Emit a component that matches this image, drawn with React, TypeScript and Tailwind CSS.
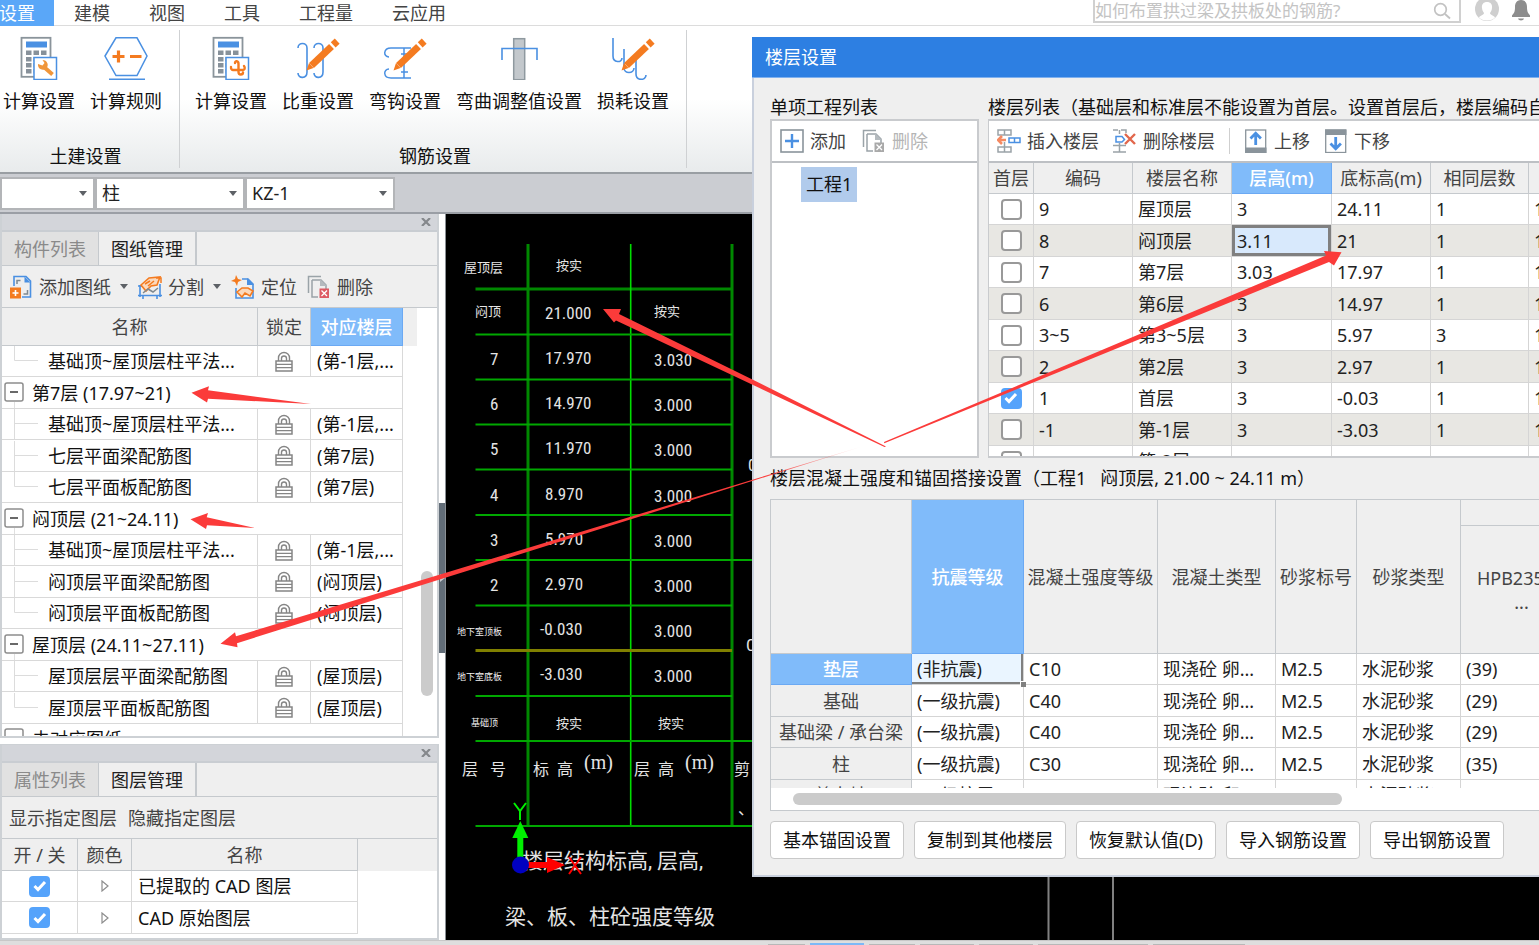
import React from "react";

const BLUE = "#4a90e2";
const ORANGE = "#f47b20";

/* ---------- icons ---------- */

function Svg({ w, h, children }: { w: number; h: number; children: React.ReactNode }) {
  return (
    <svg width={w} height={h} viewBox={`0 0 ${w} ${h}`} fill="none" className="shrink-0" aria-hidden="true">
      {children}
    </svg>
  );
}

function Calculator({ children }: { children: React.ReactNode }) {
  return (
    <Svg w={44} h={44}>
      <rect x="4.5" y="1.8" width="29" height="39" stroke="#8a949b" strokeWidth="1.8" fill="#fff" />
      <rect x="9" y="5.5" width="21" height="6" fill={BLUE} />
      {[14.5, 21, 27, 33].map((y) =>
        [9, 16.5, 24].map((x) => <rect key={`${x}-${y}`} x={x} y={y} width="5.5" height="4.5" fill="#87919a" />)
      )}
      <rect x="17" y="21.5" width="22.5" height="22" fill="#fff" stroke={BLUE} strokeWidth="1.5" />
      {children}
    </Svg>
  );
}

const CalcWrench = () => (
  <Calculator>
    <path d="M27 31l8.500 7.500" stroke="#f0963a" strokeWidth="4" strokeLinecap="butt" />
    <path d="M21 28c-.500 4 3 6.500 6.500 5.500l3-3c1-3-1-6.500-5-6.500l2 3-2 2.500z" fill="#f0963a" />
  </Calculator>
);

const CalcMove = () => (
  <Calculator>
    <path
      d="M26 27c0-2.500 3.500-2.500 3.500 1v8c0 3.500 4.500 3 4.500.500M22 31c-.500 3 1.500 3 4 3h7c3 0 3.500-2 2-4"
      stroke={ORANGE}
      strokeWidth="2.400"
      strokeLinecap="round"
    />
  </Calculator>
);

const Hexagon = () => (
  <Svg w={44} h={44}>
    <path d="M1 20L12 1.800H33L43 20 33 39.500H12z" stroke={BLUE} strokeWidth="1.500" fill="#fff" />
    <path d="M5 43.300H41" stroke={BLUE} strokeWidth="1.500" />
    <path d="M8.500 20.500h12M14.500 14.500v12M26 20.500h11.500" stroke={ORANGE} strokeWidth="3.200" />
  </Svg>
);

const Pencil = () => (
  <g>
    <path d="M10.500 34.500l2.500-7.500 4.500 5z" fill={ORANGE} />
    <path d="M15.500 29.500L35.500 10.500" stroke={ORANGE} strokeWidth="7" />
    <path d="M37.200 8.900l4-3.800" stroke={ORANGE} strokeWidth="7" />
  </g>
);

const HookWeight = () => (
  <Svg w={44} h={44}>
    <path d="M2 12C2 6 11 6 11 12V36C11 43 2 43 2 37M18 12C18 6 27 6 27 12V36C27 43 18 43 18 37" stroke={BLUE} strokeWidth="1.600" />
    <Pencil />
  </Svg>
);

const HookBend = () => (
  <Svg w={44} h={44}>
    <path d="M28 12H8C0 12 0 21 6 21M28 42H8C0 42 0 33 6 33M21 12v30M18 18h7M18 36h7" stroke={BLUE} strokeWidth="1.500" />
    <Pencil />
  </Svg>
);

const BendValue = () => (
  <Svg w={44} h={44}>
    <rect x="16.700" y="2.700" width="11" height="41" fill="#c3c8cc" stroke="#8f999f" strokeWidth="1.500" />
    <path d="M5 24V12.500H40V24" stroke={BLUE} strokeWidth="1.600" />
  </Svg>
);

const Loss = () => (
  <Svg w={44} h={44}>
    <path
      d="M2 2V20C2 27 11 27 11 22M13 13V32C13 38 23 38 23 32M25 24V38C25 45 35 45 35 39"
      stroke={BLUE}
      strokeWidth="1.600"
    />
    <Pencil />
  </Svg>
);

const AddDrawing = () => (
  <Svg w={24} h={24}>
    <path d="M5 11V1.500h12l4.500 4.500v16H13" stroke={BLUE} strokeWidth="1.600" />
    <path d="M15.500 1.500v6h6z" fill={BLUE} />
    <path d="M8 9V5.500h3.500M18.500 15v4h-4" stroke="#7e8991" strokeWidth="1.500" />
    <rect x="1" y="12.500" width="11" height="11" fill={ORANGE} />
    <path d="M6.500 15v6M3.500 18h6" stroke="#fff" strokeWidth="1.600" />
  </Svg>
);

const SplitIcon = () => (
  <Svg w={24} h={24}>
    <path d="M2 10v12M22 9v13M0 11h5M0 20.500h24M5 24v-4M19 24v-4" stroke={BLUE} strokeWidth="1.600" />
    <path d="M3 10l8-7 11-1-3 8-6 1-5 5z" fill="#fbd9bd" stroke={ORANGE} strokeWidth="1.600" />
    <path d="M7 9l5-3M10 11l6-5M18 3h5v5" stroke={ORANGE} strokeWidth="1.500" />
    <path d="M5 18l5-4 5 3 5-4" stroke="#7e8991" strokeWidth="1.500" />
  </Svg>
);

const LocateIcon = () => (
  <Svg w={24} h={24}>
    <path d="M5 0l2 4 4 1-4 2-1 4-2-4-4-1 4-2z" fill={ORANGE} />
    <path d="M11 4h6l5 5v14H5V13" stroke={BLUE} strokeWidth="1.600" />
    <path d="M16 3v7h7z" fill={BLUE} />
    <path d="M6 17l5-4 6 0 5 3-3 5-5-3-3 4z" fill="#fbd9bd" stroke={ORANGE} strokeWidth="1.600" />
  </Svg>
);

function DeleteIcon({ mark }: { mark: string }) {
  return (
    <Svg w={24} h={24}>
      <path d="M1.500 18V1.500H14" stroke="#9aa3a8" strokeWidth="1.500" />
      <path d="M5 5h9l5 5v4M5 5v17h6" stroke="#9aa3a8" strokeWidth="1.500" />
      <path d="M13 4v7h7z" fill="#b4babe" />
      <rect x="12.500" y="13.500" width="9.500" height="9.500" fill={mark} />
      <path d="M14.500 15.500l5.500 5.500M20 15.500l-5.500 5.500" stroke="#fff" strokeWidth="1.300" />
    </Svg>
  );
}

const PlusBox = () => (
  <Svg w={24} h={24}>
    <rect x="1" y="1" width="22" height="22" stroke="#8a949b" strokeWidth="1.600" fill="#fff" />
    <path d="M12 5v14M5 12h14" stroke={BLUE} strokeWidth="2.400" />
  </Svg>
);

const InsertFloor = () => (
  <Svg w={24} h={24}>
    <path d="M1 1h13v5H1zM7.500 1v5M1 18h13v5H1zM7.500 13v10" stroke="#9aa3a8" strokeWidth="1.500" />
    <path d="M9 11H2M5 7l-4 4 4 4" stroke="#f58a62" strokeWidth="2.600" />
    <path d="M12 9h11v4.500H12zM17.500 9v4.500" stroke={BLUE} strokeWidth="1.500" />
  </Svg>
);

const RemoveFloor = () => (
  <Svg w={24} h={24}>
    <path d="M0 1h5M8 1h5v3M6.500 1v4M0 16.500h13M6.500 14v9M0 23h13" stroke="#9aa3a8" strokeWidth="1.500" />
    <path d="M3 7.500h6l2.500 3L9 13H3z" stroke={BLUE} strokeWidth="1.500" />
    <path d="M12 5l10 10M22 5L12 15" stroke="#e2674c" strokeWidth="2.400" />
  </Svg>
);

function MoveIcon({ down }: { down?: boolean }) {
  return (
    <Svg w={24} h={24}>
      <rect x="1.700" y="1" width="20" height="22.500" stroke="#8a949b" strokeWidth="1.300" fill="#fff" />
      <rect x="1" y={down ? 0.5 : 18.5} width="21.500" height="5.500" fill="#8a949b" />
      <path
        d={down ? "M11.700 8v11M6.500 14.500l5.200 5.200 5.200-5.200" : "M11.700 16V5M6.500 9.500l5.200-5.200 5.200 5.200"}
        stroke={BLUE}
        strokeWidth="2.800"
      />
    </Svg>
  );
}

const Lock = () => (
  <Svg w={18} h={21}>
    <path d="M3.500 10V7a5.500 5.500 0 0111 0v3M6.500 10V7.500a2.500 2.500 0 015 0V10" stroke="#858585" strokeWidth="1.400" />
    <rect x="1" y="10" width="16" height="10" stroke="#858585" strokeWidth="1.500" fill="#fff" />
    <path d="M1 13.300h16M1 16.600h16" stroke="#858585" strokeWidth="1.300" />
  </Svg>
);

const Caret = () => (
  <Svg w={8} h={5}>
    <path d="M0 0h8L4 5z" fill="#5d6166" />
  </Svg>
);

/* ---------- shared parts ---------- */

function Check({ label, checked }: { label: string; checked?: boolean }) {
  return (
    <span className="grid place-items-center">
      <input
        type="checkbox"
        aria-label={label}
        defaultChecked={checked}
        className="peer col-start-1 row-start-1 size-[21px] appearance-none rounded-[4px] border-2 border-[#999] bg-white checked:border-[#55a3fb] checked:bg-[#55a3fb]"
      />
      <svg width="14" height="12" viewBox="0 0 14 12" fill="none" className="pointer-events-none invisible col-start-1 row-start-1 peer-checked:visible">
        <path d="M1.500 6l3.500 3.500L12 2" stroke="#fff" strokeWidth="3" />
      </svg>
    </span>
  );
}

function ToolButton({ icon, label, caret, muted }: { icon: React.ReactNode; label: string; caret?: boolean; muted?: boolean }) {
  return (
    <button
      type="button"
      disabled={muted}
      className="flex shrink-0 items-center gap-[6px] whitespace-nowrap text-[#444] disabled:text-[#b5b5b5]"
    >
      {icon}
      <span>{label}</span>
      {caret && (
        <span className="pl-[3px]">
          <Caret />
        </span>
      )}
    </button>
  );
}

function RibbonButton({ icon, label }: { icon: React.ReactNode; label: string }) {
  return (
    <button type="button" className="flex shrink-0 flex-col items-center gap-[9px] whitespace-nowrap">
      {icon}
      <span>{label}</span>
    </button>
  );
}

function PanelHead({ tabs }: { tabs: [string, string] }) {
  return (
    <>
      <div className="flex h-[18px] shrink-0 items-center justify-end border-b-2 border-[#c9cdd2] bg-[#d3d5da] pr-[6px]">
        <button type="button" aria-label="关闭">
          <Svg w={10} h={8}>
            <path d="M1 0l8 8M9 0L1 8" stroke="#85888c" strokeWidth="2.200" />
          </Svg>
        </button>
      </div>
      <div className="flex h-[34px] shrink-0 border-b border-[#c5c9cd] bg-[#efefef]">
        <button type="button" className="border-r border-[#c5c9cd] bg-[#e1e1e1] px-3 text-[#8a8a8a]">
          {tabs[0]}
        </button>
        <button type="button" className="border-r-2 border-[#c5c9cd] px-3 text-[#222]">
          {tabs[1]}
        </button>
      </div>
    </>
  );
}

/* ---------- top bars ---------- */

const menuTabs = ["建模", "视图", "工具", "工程量", "云应用"];

function MenuBar() {
  return (
    <header className="flex h-[26px] shrink-0 items-start justify-between border-b border-[#dcdcdc] bg-white text-[#444]">
      <nav className="flex gap-px">
        <button type="button" className="-ml-px h-[26px] bg-[#5aa7f8] pr-[19px] pl-0 text-white">
          设置
        </button>
        {menuTabs.map((t) => (
          <button key={t} type="button" className="h-[26px] px-[19px] whitespace-nowrap">
            {t}
          </button>
        ))}
      </nav>
      <div className="flex h-[23px] items-start">
        <label className="flex h-[23px] w-[368px] items-center border-x-2 border-b-2 border-[#d0d0d0] pr-2">
          <input
            type="search"
            aria-label="搜索"
            placeholder="如何布置拱过梁及拱板处的钢筋?"
            className="h-[20px] min-w-0 flex-1 text-[17px] leading-[20px] outline-none placeholder:text-[#c4c4c4]"
          />
          <Svg w={18} h={18}>
            <circle cx="7.500" cy="7.500" r="5.800" stroke="#c2c2c2" strokeWidth="1.700" />
            <path d="M12 12l5 4.500" stroke="#c2c2c2" strokeWidth="1.900" />
          </Svg>
        </label>
        <div className="flex gap-3 pr-2 pl-[14px]">
          <Svg w={24} h={21}>
            <circle cx="12" cy="9" r="12" fill="#cfcfcf" />
            <path d="M12 2c-4 0-5.500 3-5 6 .300 3 1.500 4 2 5 0 2-4 2.500-5 4.500 3 4 13 4 16 0-1-2-5-2.500-5-4.500.500-1 1.700-2 2-5 .500-3-1-6-5-6z" fill="#fff" />
          </Svg>
          <Svg w={20} h={21}>
            <path d="M10 0C5 0 4 4 4 7c0 5-1 6-3 8.500V17h18v-1.500C17 13 16 12 16 7c0-3-1-7-6-7z" fill="#8d8d8d" />
            <path d="M7 18.500h6c-.500 2.500-5.500 2.500-6 0z" fill="#8d8d8d" />
          </Svg>
        </div>
      </div>
    </header>
  );
}

function Ribbon() {
  return (
    <section className="flex h-[148px] shrink-0 border-b-2 border-[#999ea3] bg-linear-to-b from-white from-50% to-[#e8ebec] text-[#111]">
      <div className="flex w-[179px] flex-col gap-[31px] pt-[10px]">
        <div className="flex gap-[15px] pl-[3px]">
          <RibbonButton icon={<CalcWrench />} label="计算设置" />
          <RibbonButton icon={<Hexagon />} label="计算规则" />
        </div>
        <div className="pr-2 text-center">土建设置</div>
      </div>
      <div className="my-1 w-px bg-[#cfd1d3]" />
      <div className="flex w-[506px] flex-col gap-[31px] pt-[10px]">
        <div className="flex gap-[15px] pl-[15px]">
          <RibbonButton icon={<CalcMove />} label="计算设置" />
          <RibbonButton icon={<HookWeight />} label="比重设置" />
          <RibbonButton icon={<HookBend />} label="弯钩设置" />
          <RibbonButton icon={<BendValue />} label="弯曲调整值设置" />
          <RibbonButton icon={<Loss />} label="损耗设置" />
        </div>
        <div className="pl-1 text-center">钢筋设置</div>
      </div>
      <div className="my-1 w-px bg-[#cfd1d3]" />
    </section>
  );
}

function Combo({ label, value, wide }: { label: string; value: string; wide?: boolean }) {
  return (
    <span className={`grid items-center ${wide ? "w-[150px]" : "w-[95px]"}`}>
      <select
        aria-label={label}
        className="col-start-1 row-start-1 h-[33px] appearance-none border-2 border-[#b3b5b8] bg-white pl-[5px] text-[#222]"
      >
        <option>{value}</option>
      </select>
      <span className="pointer-events-none col-start-1 row-start-1 justify-self-end pr-2">
        <Caret />
      </span>
    </span>
  );
}

function ComboBar() {
  return (
    <div className="flex h-[40px] shrink-0 items-center border-b-2 border-[#9a9ea5] bg-[#cbcdd2]">
      <Combo label="分类" value="" />
      <Combo label="构件类型" value="柱" wide />
      <Combo label="构件" value="KZ-1" wide />
    </div>
  );
}

/* ---------- left panels ---------- */

type TreeRow = { kind: "group" | "leaf" | "last"; name: string; floor?: string };

const tree: TreeRow[] = [
  { kind: "last", name: "基础顶~屋顶层柱平法...", floor: "(第-1层,..." },
  { kind: "group", name: "第7层 (17.97~21)" },
  { kind: "leaf", name: "基础顶~屋顶层柱平法...", floor: "(第-1层,..." },
  { kind: "leaf", name: "七层平面梁配筋图", floor: "(第7层)" },
  { kind: "last", name: "七层平面板配筋图", floor: "(第7层)" },
  { kind: "group", name: "闷顶层 (21~24.11)" },
  { kind: "leaf", name: "基础顶~屋顶层柱平法...", floor: "(第-1层,..." },
  { kind: "leaf", name: "闷顶层平面梁配筋图", floor: "(闷顶层)" },
  { kind: "last", name: "闷顶层平面板配筋图", floor: "(闷顶层)" },
  { kind: "group", name: "屋顶层 (24.11~27.11)" },
  { kind: "leaf", name: "屋顶层层平面梁配筋图", floor: "(屋顶层)" },
  { kind: "last", name: "屋顶层平面板配筋图", floor: "(屋顶层)" },
  { kind: "group", name: "未对应图纸" },
];

function DrawingPanel() {
  return (
    <section className="flex min-h-0 flex-1 flex-col border-2 border-t-0 border-[#cdd1d5] bg-white">
      <PanelHead tabs={["构件列表", "图纸管理"]} />
      <div className="flex h-[42px] shrink-0 items-center gap-[10px] border-b border-[#c5c9cd] bg-[#efefef] pl-[7px]">
        <ToolButton icon={<AddDrawing />} label="添加图纸" caret />
        <ToolButton icon={<SplitIcon />} label="分割" caret />
        <ToolButton icon={<LocateIcon />} label="定位" />
        <ToolButton icon={<DeleteIcon mark="#dd5a63" />} label="删除" />
      </div>
      <div className="flex min-h-0 flex-1 justify-between overflow-hidden">
        <div className="flex items-start">
          <table className="w-[401px] table-fixed border-separate border-spacing-0 text-left text-[#111]">
            <colgroup>
              <col className="w-[256px]" />
              <col className="w-[53px]" />
              <col className="w-[92px]" />
            </colgroup>
            <thead>
              <tr className="h-[38px] bg-[#efefef] text-[#444]">
                <th className="border-r border-b border-[#c5c9cd] text-center font-normal">名称</th>
                <th className="border-r border-b border-[#c5c9cd] text-center font-normal">锁定</th>
                <th className="border-r border-b border-[#6ba9f3] bg-[#80bbfa] text-center font-medium text-white">对应楼层</th>
              </tr>
            </thead>
            <tbody>
              {tree.map((r, i) =>
                r.kind === "group" ? (
                  <tr key={i} className="odd:h-[31px] even:h-[32px]">
                    <td colSpan={3} className="border-r border-b border-[#d9d9d9] p-0">
                      <div className="flex h-[30px] items-center gap-[8px] pl-[2px] whitespace-nowrap">
                        <button type="button" aria-label="折叠">
                          <Svg w={20} h={30}>
                            <rect x="1" y="5" width="18" height="18" rx="2" stroke="#8d8d8d" strokeWidth="1.500" fill="#fff" />
                            <path d="M6 14h8" stroke="#444" strokeWidth="1.600" />
                            <path d="M10.500 24v6" stroke="#e0e0e0" />
                          </Svg>
                        </button>
                        <span>{r.name}</span>
                      </div>
                    </td>
                  </tr>
                ) : (
                  <tr key={i} className="odd:h-[31px] even:h-[32px]">
                    <td className="border-r border-b border-[#d9d9d9] p-0">
                      <div className="flex h-[30px] items-center whitespace-nowrap">
                        <Svg w={46} h={30}>
                          <path d={r.kind === "last" ? "M12.500 0v14.500H36" : "M12.500 0v30M12.500 14.500H36"} stroke="#dcdcdc" />
                        </Svg>
                        <span>{r.name}</span>
                      </div>
                    </td>
                    <td className="border-r border-b border-[#d9d9d9] p-0">
                      <div className="flex justify-center">
                        <Lock />
                      </div>
                    </td>
                    <td className="border-r border-b border-[#d9d9d9] p-0 pl-[6px] whitespace-nowrap">{r.floor}</td>
                  </tr>
                )
              )}
            </tbody>
          </table>
          <div className="h-[38px] w-[14px] bg-[#efefef]" />
        </div>
        <div className="mt-[263px] mr-[4px] h-[125px] w-[12px] rounded-full bg-[#cbcbcb]" />
      </div>
    </section>
  );
}

function LayerPanel() {
  const rows = ["已提取的 CAD 图层", "CAD 原始图层"];
  return (
    <section className="shrink-0 border-2 border-t border-[#cdd1d5] bg-white pb-[4px]">
      <PanelHead tabs={["属性列表", "图层管理"]} />
      <div className="flex h-[42px] items-center gap-[11px] border-b border-[#c5c9cd] bg-[#efefef] pl-[7px] text-[#444]">
        <button type="button">显示指定图层</button>
        <button type="button">隐藏指定图层</button>
      </div>
      <div className="flex items-start">
        <table className="w-[356px] table-fixed border-separate border-spacing-0 text-left text-[#111]">
          <colgroup>
            <col className="w-[76px]" />
            <col className="w-[54px]" />
            <col className="w-[226px]" />
          </colgroup>
          <thead>
            <tr className="h-[32px] bg-[#efefef] text-[#444]">
              {["开 / 关", "颜色", "名称"].map((h) => (
                <th key={h} className="border-r border-b border-[#c5c9cd] p-0 text-center font-normal">
                  {h}
                </th>
              ))}
            </tr>
          </thead>
          <tbody>
            {rows.map((r) => (
              <tr key={r} className="odd:h-[31px] even:h-[32px]">
                <td className="border-r border-b border-[#d9d9d9] p-0">
                  <Check label={r} checked />
                </td>
                <td className="border-r border-b border-[#d9d9d9] p-0">
                  <div className="flex justify-center">
                    <Svg w={8} h={12}>
                      <path d="M1 1v10l6-5z" stroke="#8d8d8d" strokeWidth="1.200" />
                    </Svg>
                  </div>
                </td>
                <td className="border-r border-b border-[#d9d9d9] p-0 pl-[6px]">{r}</td>
              </tr>
            ))}
          </tbody>
        </table>
        <div className="h-[32px] flex-1 bg-[#efefef]" />
      </div>
    </section>
  );
}

/* ---------- drawing canvas ---------- */

const levels: [string, number, string, string][] = [
  ["7", 359, "17.970", "3.030"],
  ["6", 404, "14.970", "3.000"],
  ["5", 449, "11.970", "3.000"],
  ["4", 495, "8.970", "3.000"],
  ["3", 540, "5.970", "3.000"],
  ["2", 585, "2.970", "3.000"],
];

function Canvas() {
  return (
    <svg
      className="h-full w-full bg-black font-['Liberation_Sans_Narrow','Roboto_Condensed','DejaVu_Sans_Condensed','Noto_Sans_CJK_SC',sans-serif]"
      aria-label="楼层表"
    >
      <g transform="translate(-446 -214)">
        <g stroke="#008800" strokeWidth="3">
          <path d="M528 244V826M732 244V826" />
          <path d="M475.500 289H732" />
        </g>
        <path d="M630.700 244V826" stroke="#00dc00" strokeWidth="1.600" />
        <g stroke="#00a800" strokeWidth="2">
          <path d="M475.500 334.500H732M475.500 379.500H732M475.500 424.500H732M475.500 469.500H732M475.500 515H732M475.500 560H760M475.500 605.500H732M475.500 696H732M475.500 741H760M475.500 826H760" />
        </g>
        <path d="M475.500 650.500H732" stroke="#808000" strokeWidth="3" />
        <path d="M1048.500 860V945M1113 860V945" stroke="#808080" strokeWidth="2" />

        <g fill="#e4e4e4" fontSize="17">
          {levels.map(([n, y, a, b]) => (
            <g key={n}>
              <text x="490" y={y + 6}>{n}</text>
              <text x="545" y={y + 5}>{a}</text>
              <text x="654" y={y + 7}>{b}</text>
            </g>
          ))}
          <text x="545" y="319">21.000</text>
          <text x="540" y="635">-0.030</text>
          <text x="654" y="637">3.000</text>
          <text x="540" y="680">-3.030</text>
          <text x="654" y="682">3.000</text>
          <text x="748" y="471">0</text>
          <text x="746" y="651">C</text>
        </g>
        <g fill="#e4e4e4" fontSize="13">
          <text x="464" y="272">屋顶层</text>
          <text x="475" y="316">闷顶</text>
          <text x="556" y="270">按实</text>
          <text x="654" y="316">按实</text>
          <text x="556" y="728">按实</text>
          <text x="658" y="728">按实</text>
        </g>
        <g fill="#f4f4f4" fontSize="9">
          <text x="457" y="635">地下室顶板</text>
          <text x="457" y="680">地下室底板</text>
          <text x="471" y="726">基础顶</text>
        </g>
        <g fill="#e4e4e4" fontSize="16">
          <text x="462" y="775">层</text>
          <text x="490" y="775">号</text>
          <text x="533" y="775">标</text>
          <text x="557" y="775">高</text>
          <text x="634" y="775">层</text>
          <text x="658" y="775">高</text>
          <text x="734" y="775">剪</text>
          <text x="738" y="814">、</text>
        </g>
        <g fill="#e4e4e4" fontSize="20" className="font-['Liberation_Serif',serif]">
          <text x="584" y="769">(m)</text>
          <text x="685" y="769">(m)</text>
        </g>
        <g fill="#e4e4e4" fontSize="21">
          <text x="522" y="868">楼层结构标高, 层高,</text>
          <text x="505" y="924">梁、板、柱砼强度等级</text>
        </g>

        <path d="M520.300 858V836" stroke="#00f000" strokeWidth="6" />
        <path d="M520.300 821l8 17h-16z" fill="#00f000" />
        <path d="M526 865h22" stroke="#f00" strokeWidth="6" />
        <path d="M565 865l-18-8v16z" fill="#f00" />
        <circle cx="520.500" cy="865" r="8.500" fill="#0000c0" />
        <path d="M514 803l6 8 6-8M520 811v9" stroke="#00f000" strokeWidth="2" fill="none" />
        <path d="M569 857l12 17M581 857l-12 17" stroke="#f00" strokeWidth="2" />
      </g>
    </svg>
  );
}

/* ---------- dialog ---------- */

const floorRows: [string, string, string, string, string][] = [
  ["9", "屋顶层", "3", "24.11", "1"],
  ["8", "闷顶层", "3.11", "21", "1"],
  ["7", "第7层", "3.03", "17.97", "1"],
  ["6", "第6层", "3", "14.97", "1"],
  ["3~5", "第3~5层", "3", "5.97", "3"],
  ["2", "第2层", "3", "2.97", "1"],
  ["1", "首层", "3", "-0.03", "1"],
  ["-1", "第-1层", "3", "-3.03", "1"],
  ["", "第-2层", "", "", ""],
];

function FloorTable() {
  const th = "border-r border-b border-[#c5c9cd] p-0 text-center font-normal";
  const td = "border-r border-b border-[#d5d5d5] p-0 pl-[5px] whitespace-nowrap";
  return (
    <table className="w-[640px] table-fixed border-separate border-spacing-0 text-left text-[#222]">
      <colgroup>
        <col className="w-[45px]" />
        <col className="w-[99px]" />
        <col className="w-[99px]" />
        <col className="w-[100px]" />
        <col className="w-[99px]" />
        <col className="w-[98px]" />
        <col className="w-[100px]" />
      </colgroup>
      <thead>
        <tr className="h-[31px] bg-[#efefef] text-[#444]">
          <th className={th}>首层</th>
          <th className={th}>编码</th>
          <th className={th}>楼层名称</th>
          <th className="border-r border-b border-[#6ba9f3] bg-[#80bbfa] p-0 text-center font-medium text-white">层高(m)</th>
          <th className={th}>底标高(m)</th>
          <th className={th}>相同层数</th>
          <th className={th} />
        </tr>
      </thead>
      <tbody>
        {floorRows.map((r) => (
          <tr key={r[1]} className="odd:h-[31px] odd:bg-white even:h-[32px] even:bg-[#e8e7e3]">
            <td className="border-r border-b border-[#d5d5d5] p-0">
              <Check label={r[1]} checked={r[0] === "1"} />
            </td>
            <td className={td}>{r[0]}</td>
            <td className={td}>{r[1]}</td>
            <td className={r[0] === "8" ? `${td} bg-[#d8e9fc] shadow-[inset_0_0_0_3px_#808080]` : td}>{r[2]}</td>
            <td className={td}>{r[3]}</td>
            <td className={td}>{r[4]}</td>
            <td className={td}>{r[0] && "1"}</td>
          </tr>
        ))}
      </tbody>
    </table>
  );
}

const strengthRows: [string, string, string, string][] = [
  ["垫层", "(非抗震)", "C10", "(39)"],
  ["基础", "(一级抗震)", "C40", "(29)"],
  ["基础梁 / 承台梁", "(一级抗震)", "C40", "(29)"],
  ["柱", "(一级抗震)", "C30", "(35)"],
  ["剪力墙", "(一级抗震)", "", ""],
];

function StrengthTable() {
  const th = "border-r border-b border-[#c5c9cd] p-0 text-center font-normal whitespace-nowrap";
  const td = "border-r border-b border-[#d5d5d5] p-0 pl-[5px] whitespace-nowrap";
  return (
    <table className="w-[812px] table-fixed border-separate border-spacing-0 text-left text-[#222]">
      <colgroup>
        <col className="w-[141px]" />
        <col className="w-[112px]" />
        <col className="w-[134px]" />
        <col className="w-[118px]" />
        <col className="w-[81px]" />
        <col className="w-[104px]" />
        <col className="w-[122px]" />
      </colgroup>
      <thead className="bg-[#efefef] text-[#444]">
        <tr className="h-[26px]">
          <th rowSpan={2} className={th} />
          <th rowSpan={2} className="border-r border-b border-[#6ba9f3] bg-[#80bbfa] p-0 text-center font-medium text-white">
            抗震等级
          </th>
          <th rowSpan={2} className={th}>混凝土强度等级</th>
          <th rowSpan={2} className={th}>混凝土类型</th>
          <th rowSpan={2} className={th}>砂浆标号</th>
          <th rowSpan={2} className={th}>砂浆类型</th>
          <th className={th} />
        </tr>
        <tr className="h-[128px]">
          <th className={th}>
            HPB235(A)
            <br />
            ...
          </th>
        </tr>
      </thead>
      <tbody>
        {strengthRows.map((r, i) => (
          <tr key={r[0]} className="odd:h-[31px] even:h-[32px]">
            <th
              scope="row"
              className={
                i === 0
                  ? "border-r border-b border-[#6ba9f3] bg-[#80bbfa] p-0 text-center font-medium text-white"
                  : `${th} bg-[#efefef] text-[#444]`
              }
            >
              {r[0]}
            </th>
            <td className={i === 0 ? `${td} relative bg-[#eaf5ff] shadow-[inset_-2px_-2px_0_0_#808080]` : td}>
              {r[1]}
              {i === 0 && <span className="absolute -right-[3px] -bottom-[3px] size-[6px] border-t border-l border-white bg-[#808080]" />}
            </td>
            <td className={td}>{r[2]}</td>
            <td className={td}>现浇砼 卵...</td>
            <td className={td}>{r[2] && "M2.5"}</td>
            <td className={td}>水泥砂浆</td>
            <td className={td}>{r[3]}</td>
          </tr>
        ))}
      </tbody>
    </table>
  );
}

const dialogActions = ["基本锚固设置", "复制到其他楼层", "恢复默认值(D)", "导入钢筋设置", "导出钢筋设置"];

function FloorDialog() {
  return (
    <div
      role="dialog"
      aria-label="楼层设置"
      className="absolute top-[37px] right-0 left-[752px] overflow-hidden border-b-2 border-[#c9d0dd] bg-[#efefef] text-[#111]"
    >
      <h2 className="flex h-[41px] items-center border-b border-[#7fb0ee] bg-[#2d7fe2] pl-[13px] text-white">楼层设置</h2>
      <div className="border-l-2 border-[#c9d0dd] pb-4 pl-4">
        <div className="flex gap-[9px] pt-[17px]">
          <div className="w-[209px] shrink-0">
            <h3>单项工程列表</h3>
            <div className="border-2 border-[#c9cbce] bg-white">
              <div className="flex h-[42px] items-center gap-4 border-b-2 border-[#bdc0c4] pl-2">
                <ToolButton icon={<PlusBox />} label="添加" />
                <ToolButton icon={<DeleteIcon mark="#a9a9a9" />} label="删除" muted />
              </div>
              <ul className="h-[293px] pt-1 pl-[29px]">
                <li className="inline-block h-[35px] bg-[#b1cbec] px-[5px] leading-[35px]">工程1</li>
              </ul>
            </div>
          </div>
          <div className="min-w-0 flex-1">
            <h3 className="whitespace-nowrap">楼层列表（基础层和标准层不能设置为首层。设置首层后，楼层编码自动计算）</h3>
            <div className="h-[339px] overflow-hidden border-2 border-r-0 border-l border-[#c9cbce] bg-white">
              <div className="flex h-[42px] items-center gap-[14px] border-b-2 border-[#bdc0c4] pl-2">
                <ToolButton icon={<InsertFloor />} label="插入楼层" />
                <ToolButton icon={<RemoveFloor />} label="删除楼层" />
                <div className="h-[26px] w-px bg-[#cfcfcf]" />
                <ToolButton icon={<MoveIcon />} label="上移" />
                <ToolButton icon={<MoveIcon down />} label="下移" />
              </div>
              <FloorTable />
            </div>
          </div>
        </div>
        <h3 className="pt-[8px] pb-[9px] whitespace-pre">楼层混凝土强度和锚固搭接设置（工程1{"  "} 闷顶层, 21.00 ~ 24.11 m）</h3>
        <div className="border border-r-0 border-[#c5c9cd] bg-white">
          <div className="h-[288px] overflow-hidden">
            <StrengthTable />
          </div>
          <div className="h-[22px] pt-[5px] pl-[22px]">
            <div className="h-[12px] w-[549px] rounded-full bg-[#cbcbcb]" />
          </div>
        </div>
        <div className="flex gap-[10px] pt-[10px]">
          {dialogActions.map((a) => (
            <button
              key={a}
              type="button"
              className="h-[38px] shrink-0 rounded-[4px] border border-[#c9c9c9] bg-white px-3 whitespace-nowrap"
            >
              {a}
            </button>
          ))}
        </div>
      </div>
    </div>
  );
}

/* ---------- callout arrows ---------- */

function Arrows() {
  return (
    <svg className="pointer-events-none absolute inset-0 h-full w-full" fill="#fb3b3a" aria-hidden="true">
      <defs>
        <linearGradient id="tail" gradientUnits="userSpaceOnUse" x1="760" y1="0" x2="862" y2="0">
          <stop offset="0" stopColor="#fb3b3a" />
          <stop offset="1" stopColor="#fb3b3a" stopOpacity="0.100" />
        </linearGradient>
      </defs>
      <path d="M603 309l18 0-2 5L760 383.300 886 446.500 884.500 447 760 388.300 616 320.500l-2 2z" />
      <path d="M1341.500 252.300L1324 251l2 4.500L884 442l.300 1.200L1329 262l5 3.500z" />
      <path d="M220.500 643.700L235 632.300l1 4L450 571.500 862 446.500 450 576.300 237 643.200l.500 4z" fill="url(#tail)" />
      <path d="M191.500 392.700L209 386.300l-1 4L311 404 208 398.800l-1 3.700z" />
      <path d="M190.500 519.300L208 513l-1.300 4.300L255 528 207 525.300 206 529z" />
    </svg>
  );
}

function StatusBar() {
  return (
    <footer className="flex h-[5px] shrink-0 items-end gap-[5px] border-t border-[#c8c8c8] bg-[#dedede] pl-[768px]">
      <div className="h-px w-[37px] bg-[#b8b8b8]" />
      <div className="h-[2px] w-[54px] bg-[#7db9f7]" />
      <div className="h-px w-[46px] bg-[#b8b8b8]" />
      <div className="h-px w-[54px] bg-[#b8b8b8]" />
      <div className="h-px w-[54px] bg-[#b8b8b8]" />
      <div className="h-px w-[110px] bg-[#b8b8b8]" />
      <div className="h-px w-[92px] bg-[#b8b8b8]" />
    </footer>
  );
}

export default function App() {
  return (
    <div className="relative flex h-screen flex-col overflow-hidden bg-white font-['Noto_Sans','Noto_Sans_CJK_SC',sans-serif] text-[18px] leading-[24px]">
      <MenuBar />
      <Ribbon />
      <ComboBar />
      <main className="flex min-h-0 flex-1">
        <aside className="flex w-[439px] shrink-0 flex-col gap-[6px]">
          <DrawingPanel />
          <LayerPanel />
        </aside>
        <div className="flex w-[7px] shrink-0 flex-col border-r border-[#8a8f94] pt-[289px]">
          <div className="grid h-[150px] place-items-center bg-[#626d78]">
            <Svg w={5} h={8}>
              <path d="M0 0l5 4-5 4z" fill="#c8ccd0" />
            </Svg>
          </div>
        </div>
        <div className="min-w-0 flex-1">
          <Canvas />
        </div>
      </main>
      <StatusBar />
      <FloorDialog />
      <Arrows />
    </div>
  );
}
